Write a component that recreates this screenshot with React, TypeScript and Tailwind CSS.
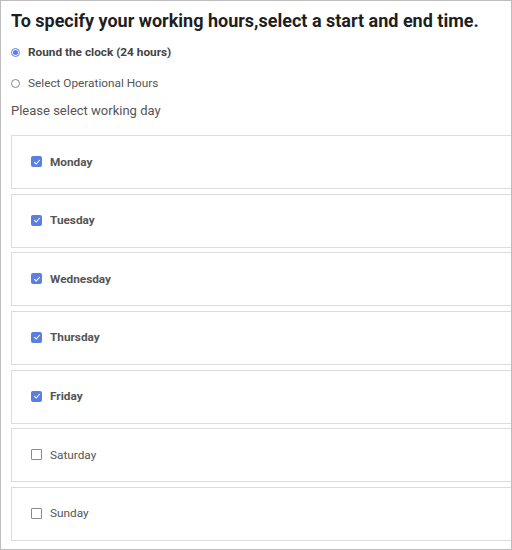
import React from 'react'

const days = [
  { name: 'Monday', checked: true },
  { name: 'Tuesday', checked: true },
  { name: 'Wednesday', checked: true },
  { name: 'Thursday', checked: true },
  { name: 'Friday', checked: true },
  { name: 'Saturday', checked: false },
  { name: 'Sunday', checked: false },
]

function Radio({ checked }: { checked: boolean }) {
  return (
    <span
      className={`flex h-[9px] w-[9px] items-center justify-center rounded-full border ${
        checked ? 'border-[#5b7fe0]' : 'border-[#888]'
      } bg-white`}
    >
      {checked && <span className="h-[5px] w-[5px] rounded-full bg-[#5b7fe0]" />}
    </span>
  )
}

function Checkbox({ checked }: { checked: boolean }) {
  if (checked) {
    return (
      <span className="flex h-[11px] w-[11px] items-center justify-center rounded-[2px] bg-[#5b7fe0]">
        <svg viewBox="0 0 10 10" className="h-[8px] w-[8px]">
          <path d="M1.5 5.2 L4 7.5 L8.5 2.5" fill="none" stroke="white" strokeWidth="1.3" />
        </svg>
      </span>
    )
  }
  return <span className="h-[11px] w-[11px] rounded-[1px] border border-[#8a8a8a] bg-white" />
}

export default function App() {
  return (
    <div
      className="h-[550px] w-[512px] overflow-hidden border border-[#bdbdbd] bg-white pl-[10px]"
      style={{ fontFamily: 'Roboto, "Liberation Sans", sans-serif' }}
    >
      <h1 className="mt-[8px] text-[18px] font-bold leading-[24px] text-[#1f1f1f]">
        To specify your working hours,select a start and end time.
      </h1>
      <div className="mt-[11px] flex items-center gap-[8px]">
        <Radio checked />
        <span className="text-[11.8px] font-bold leading-[16px] text-[#444]">Round the clock (24 hours)</span>
      </div>
      <div className="mt-[15px] flex items-center gap-[8px]">
        <Radio checked={false} />
        <span className="text-[11.8px] leading-[16px] text-[#555]">Select Operational Hours</span>
      </div>
      <p className="mt-[12px] text-[13px] leading-[16px] text-[#555]">Please select working day</p>
      <div className="mt-[16px] flex w-[510px] flex-col gap-[4.67px]">
        {days.map((d) => (
          <div key={d.name} className="flex h-[54px] items-center gap-[8px] border border-[#dcdcdc] pb-[1px] pl-[19px]">
            <Checkbox checked={d.checked} />
            <span className={`text-[11.8px] leading-[16px] text-[#555] ${d.checked ? 'font-bold' : ''}`}>{d.name}</span>
          </div>
        ))}
      </div>
    </div>
  )
}
